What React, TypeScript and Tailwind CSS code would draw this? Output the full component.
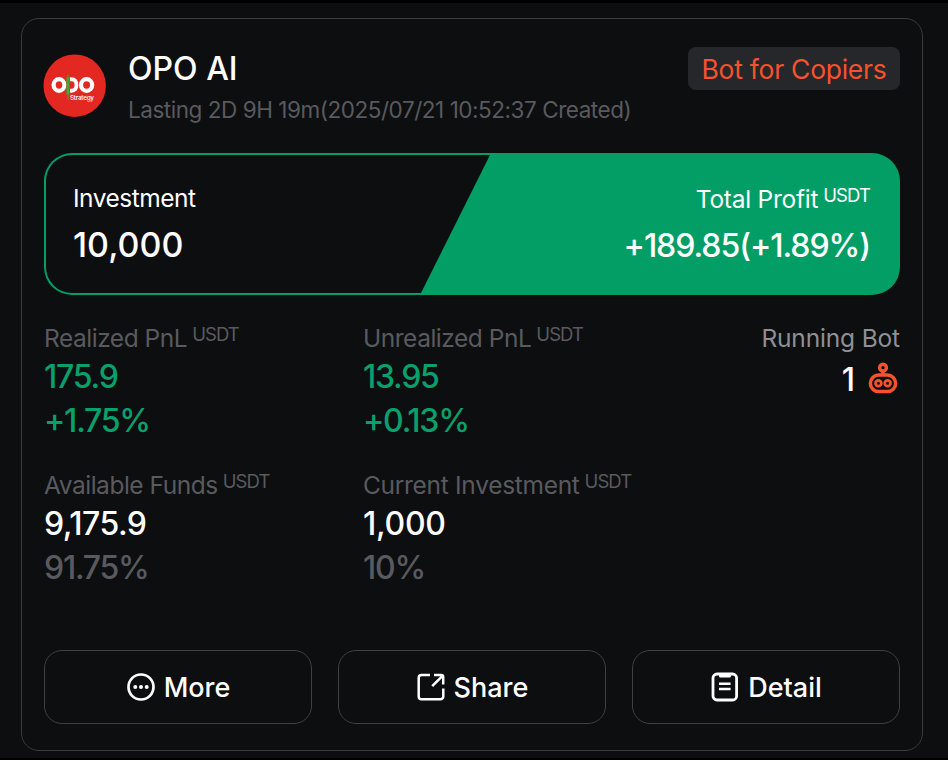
import type { ReactNode } from "react";

const Logo = () => {
  return (
    <svg
      viewBox="0 0 63 63"
      className="w-[63px] h-[63px] shrink-0 mt-[7px] -ml-px"
      fontFamily="Inter, sans-serif"
    >
      <circle cx="31.7" cy="31.7" r="31.2" fill="#e32822" />
      <g fill="none" stroke="#fff" strokeWidth="4.2">
        <ellipse cx="16" cy="31" rx="5.4" ry="5.8" />
        <path d="M27 25.4c5.4-.8 6.4 2.4 6.4 5.6s-1 6.4-6.4 5.6" strokeWidth="3.8" />
        <ellipse cx="43.6" cy="31" rx="5.6" ry="5.8" />
      </g>
      <path d="M25 20.5v25" stroke="#43a833" strokeWidth="1" />
      <rect x="23.4" y="23.5" width="3" height="17" fill="#43a833" />
      <text x="27" y="45.6" fontSize="6.4" fontWeight="500" fill="#fff" textLength="24">
        Strategy
      </text>
    </svg>
  );
};

const BotIcon = () => {
  return (
    <svg
      viewBox="0 0 30 32"
      className="w-[30px] h-8"
      fill="none"
      stroke="#f9512d"
      strokeWidth="3.5"
    >
      <circle cx="15" cy="5.7" r="3.4" />
      <path d="M15 9v4" />
      <rect x="2.4" y="13" width="25.2" height="16.6" rx="8.2" />
      <circle cx="10.4" cy="21.3" r="2.9" strokeWidth="2.7" />
      <circle cx="19.6" cy="21.3" r="2.9" strokeWidth="2.7" />
    </svg>
  );
};

const MoreIcon = () => {
  return (
    <svg viewBox="0 0 28 28" className="w-7 h-7" fill="#fff">
      <circle cx="14" cy="14" r="12.5" fill="none" stroke="#fff" strokeWidth="2.7" />
      <circle cx="8.3" cy="14" r="2" />
      <circle cx="14" cy="14" r="2" />
      <circle cx="19.7" cy="14" r="2" />
    </svg>
  );
};

const ShareIcon = () => {
  return (
    <svg
      viewBox="0 0 28 28"
      className="w-7 h-7"
      fill="none"
      stroke="#fff"
      strokeWidth="2.5"
    >
      <path d="M13 2H4.5A2.8 2.8 0 0 0 1.7 4.8v18.6a2.8 2.8 0 0 0 2.8 2.8h19a2.8 2.8 0 0 0 2.8-2.8V15.5" />
      <path d="M17 2h7.2a2 2 0 0 1 2 2v7.5M25.5 2.8 15.2 13.2" />
    </svg>
  );
};

const DetailIcon = () => {
  return (
    <svg
      viewBox="0 0 28 30"
      className="w-7 h-[30px]"
      fill="none"
      stroke="#fff"
      strokeWidth="2.8"
    >
      <rect x="2" y="2" width="23.6" height="26" rx="4" />
      <path d="M8 1.5h12v2.6a1.5 1.5 0 0 1-1.5 1.5h-9A1.5 1.5 0 0 1 8 4.1z" fill="#fff" stroke="none" />
      <path d="M8 11.8h11.6M8 17h11.6" strokeWidth="2.6" />
    </svg>
  );
};

const Unit = () => {
  return (
    <span className="text-[18.5px] leading-[30px] -mt-[9px] ml-[5px] tracking-[-0.9px]">
      USDT
    </span>
  );
};

const Stat = ({
  label,
  value,
  percent,
  valueClass,
  percentColor,
}: {
  label: ReactNode;
  value: string;
  percent: string;
  valueClass: string;
  percentColor: string;
}) => {
  return (
    <div className="font-medium text-[32px]">
      <div className="flex items-center h-8 pb-0.5 text-[24.5px] font-normal tracking-[-0.48px] text-[#595a5f]">
        {label}
        <Unit />
      </div>
      <div className={`leading-[44px] ${valueClass}`}>{value}</div>
      <div className={`leading-[44px] tracking-[-1.25px] ${percentColor}`}>{percent}</div>
    </div>
  );
};

const Action = ({ icon, label }: { icon: ReactNode; label: string }) => {
  return (
    <button className="flex items-center justify-center gap-[9px] h-[74px] pl-px rounded-[18px] border border-[#3f4043] text-[27px] font-medium text-white">
      {icon}
      <span className="pt-0.5">{label}</span>
    </button>
  );
};

export default function App() {
  return (
    <div className="w-[948px] h-[760px] overflow-hidden bg-[#0d0e10] border-t-[3px] border-b-2 border-black pt-[15px] pl-[21px] font-['Inter',sans-serif]">
      <div className="w-[902px] h-[733px] rounded-[18px] border border-[#3a3b3d] pt-7 px-[22px]">
        <div className="flex h-[106px]">
          <Logo />
          <div className="ml-[22px] flex-1">
            <h2 className="text-[32px] leading-[44px] font-medium text-white">OPO AI</h2>
            <p className="text-[22.5px] leading-[38px] tracking-[-0.46px] text-[#595a5f] whitespace-nowrap">
              Lasting 2D 9H 19m(2025/07/21 10:52:37 Created)
            </p>
          </div>
          <span className="h-[43px] w-[212px] pt-0.5 flex items-center justify-center rounded-lg bg-[#26272b] text-[26.5px] tracking-[-0.27px] text-[#f9512d] whitespace-nowrap">
            Bot for Copiers
          </span>
        </div>

        <div className="flex h-[142px] rounded-[28px] bg-[#029e66] p-[2px] text-white">
          <div className="w-[444px] pt-[26px] pl-[27px] rounded-l-[26px] bg-[#0d0e10] [clip-path:polygon(0_0,100%_0,375px_100%,0_100%)]">
            <div className="text-[24.5px] leading-[34px] tracking-[-0.5px]">
              Investment
            </div>
            <div className="text-[34px] leading-[59px] font-medium">10,000</div>
          </div>
          <div className="flex-1 pt-[26px] pr-[28px]">
            <div className="flex items-center justify-end h-9 text-[24.5px] tracking-[-0.25px]">
              Total Profit
              <Unit />
            </div>
            <div className="text-[32px] leading-[57px] font-medium text-right tracking-[-1.05px]">
              +189.85(+1.89%)
            </div>
          </div>
        </div>

        <div className="grid grid-cols-[319px_319px_1fr] gap-y-[27px] mt-7 h-[327px] content-start">
          <Stat
            label="Realized PnL"
            value="175.9"
            percent="+1.75%"
            valueClass="text-[#08a06b] tracking-[-1.2px]"
            percentColor="text-[#08a06b]"
          />
          <Stat
            label="Unrealized PnL"
            value="13.95"
            percent="+0.13%"
            valueClass="text-[#08a06b] tracking-[-1.3px]"
            percentColor="text-[#08a06b]"
          />
          <div className="text-right">
            <div className="text-[24.5px] leading-[31px] tracking-[-0.15px] text-[#8f9095]">
              Running Bot
            </div>
            <div className="flex items-center justify-end gap-[13px] h-12 pr-[2px] text-[32px] font-medium text-white">
              <span className="pt-1">1</span>
              <BotIcon />
            </div>
          </div>
          <Stat
            label="Available Funds"
            value="9,175.9"
            percent="91.75%"
            valueClass="text-white tracking-[-0.5px]"
            percentColor="text-[#595a5f]"
          />
          <Stat
            label={<span className="tracking-[-0.3px]">Current Investment</span>}
            value="1,000"
            percent="10%"
            valueClass="text-white tracking-[-0.3px]"
            percentColor="text-[#595a5f]"
          />
        </div>

        <div className="grid grid-cols-3 gap-[26px]">
          <Action icon={<MoreIcon />} label="More" />
          <Action icon={<ShareIcon />} label="Share" />
          <Action icon={<DetailIcon />} label="Detail" />
        </div>
      </div>
    </div>
  );
}
